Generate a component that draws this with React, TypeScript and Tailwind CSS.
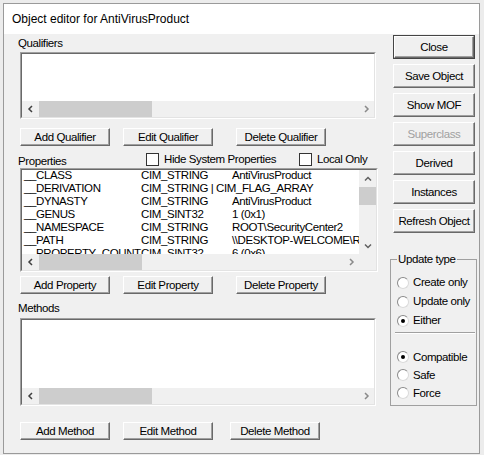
import type { ReactNode } from "react";

const font = "font-['Liberation_Sans',Arial,sans-serif]";

function Chev({ d, c = "#606060" }: { d: "l" | "r" | "u" | "d"; c?: string }) {
  const p = { l: "M5 1L2 4l3 3", r: "M3 1l3 3-3 3", u: "M1 5.5l3-3 3 3", d: "M1 2.5l3 3 3-3" }[d];
  return (
    <svg width="8" height="8" viewBox="0 0 8 8">
      <path d={p} stroke={c} strokeWidth="1.5" fill="none" />
    </svg>
  );
}

function HScroll({ thumb }: { thumb: string }) {
  return (
    <div className="flex h-[16px] shrink-0 bg-[#f0f0f0]">
      <div className="flex w-[17px] items-center justify-center"><Chev d="l" c="#404040" /></div>
      <div className="flex-1"><div className={`h-full bg-[#cdcdcd] ${thumb}`} /></div>
      <div className="flex w-[17px] items-center justify-center"><Chev d="r" c="#8a8a8a" /></div>
    </div>
  );
}

function Frame({ className, children }: { className: string; children: ReactNode }) {
  return (
    <div className={`border border-t-[#a0a0a0] border-l-[#a0a0a0] border-r-white border-b-white ${className}`}>
      <div className="flex h-full flex-col overflow-hidden border border-t-[#696969] border-l-[#696969] border-r-[#e3e3e3] border-b-[#e3e3e3] bg-white">
        {children}
      </div>
    </div>
  );
}

function Btn({ children, className = "", off }: { children: ReactNode; className?: string; off?: boolean }) {
  return (
    <div
      className={`flex items-center justify-center whitespace-nowrap border border-t-white border-l-white border-r-[#696969] border-b-[#696969] bg-[#f0f0f0] shadow-[inset_-1px_-1px_0_#a0a0a0] ${off ? "text-[#a0a0a0]" : "text-black"} ${className}`}
    >
      {children}
    </div>
  );
}

function Check() {
  return <span className="block h-[13px] w-[13px] shrink-0 border border-[#333333] bg-white" />;
}

function Radio({ on, label, h }: { on?: boolean; label: string; h: string }) {
  return (
    <div className={`flex items-center pl-[6px] ${h}`}>
      <span className="flex h-[12px] w-[12px] items-center justify-center rounded-full border border-t-[#8a8a8a] border-l-[#8a8a8a] border-r-[#dadada] border-b-[#dadada] bg-white">
        {on && <span className="h-[4px] w-[4px] rounded-full bg-black" />}
      </span>
      <span className="ml-[4px]">{label}</span>
    </div>
  );
}

const props: [string, string, string][] = [
  ["__CLASS", "CIM_STRING", "AntiVirusProduct"],
  ["__DERIVATION", "CIM_STRING | CIM_FLAG_ARRAY", ""],
  ["__DYNASTY", "CIM_STRING", "AntiVirusProduct"],
  ["__GENUS", "CIM_SINT32", "1 (0x1)"],
  ["__NAMESPACE", "CIM_STRING", "ROOT\\SecurityCenter2"],
  ["__PATH", "CIM_STRING", "\\\\DESKTOP-WELCOME\\ROOT\\SecurityCenter2:AntiVirusProduct"],
  ["__PROPERTY_COUNT", "CIM_SINT32", "6 (0x6)"],
];

export default function App() {
  return (
    <div className={`h-[455px] w-[484px] overflow-hidden bg-[#ececec] pl-[3px] pt-[3px] text-black ${font}`}>
      <div className="flex h-[451px] w-[477px] flex-col border border-[#9a9a9a] bg-[#f0f0f0]">
        <div className="flex h-[30px] shrink-0 items-center bg-white pl-[8px] text-[12px]">
          Object editor for AntiVirusProduct
        </div>
        <div className="flex flex-1 text-[11.5px] leading-[13px] tracking-[-0.4px]">
          <div className="flex w-[386px] flex-col">
            <div className="ml-[14px] mt-[3px] h-[13px]">Qualifiers</div>
            <Frame className="ml-[16px] mt-[2px] h-[67px] w-[356px]">
              <div className="flex-1" />
              <HScroll thumb="w-[113px]" />
            </Frame>
            <div className="ml-[16px] mt-[9px] flex h-[18px]">
              <Btn className="w-[90px]">Add Qualifier</Btn>
              <Btn className="ml-[13px] w-[90px]">Edit Qualifier</Btn>
              <Btn className="ml-[23px] w-[90px]">Delete Qualifier</Btn>
            </div>
            <div className="mt-[5px] flex h-[16px] items-center">
              <span className="ml-[14px] w-[128px] pt-[4px]">Properties</span>
              <div className="flex w-[153px] items-center">
                <Check />
                <span className="ml-[5px]">Hide System Properties</span>
              </div>
              <div className="flex items-center">
                <Check />
                <span className="ml-[5px]">Local Only</span>
              </div>
            </div>
            <Frame className="ml-[16px] mt-[1px] h-[104px] w-[358px]">
              <div className="flex flex-1 overflow-hidden">
                <div className="flex-1 overflow-hidden pl-[2px]">
                  <div className="-mt-[1px]">
                    {props.map(([n, t, v]) => (
                      <div key={n} className="grid h-[13px] grid-cols-[117px_91px_1fr] whitespace-nowrap">
                        <span>{n}</span>
                        <span>{t}</span>
                        <span>{v}</span>
                      </div>
                    ))}
                  </div>
                </div>
                <div className="flex w-[17px] flex-col bg-[#f0f0f0]">
                  <div className="flex h-[17px] items-center justify-center"><Chev d="u" /></div>
                  <div className="h-[18px] bg-[#cdcdcd]" />
                  <div className="flex-1" />
                  <div className="flex h-[17px] items-center justify-center"><Chev d="d" /></div>
                </div>
              </div>
              <div className="flex">
                <div className="flex-1"><HScroll thumb="w-[103px]" /></div>
                <div className="w-[17px] bg-[#f0f0f0]" />
              </div>
            </Frame>
            <div className="ml-[16px] mt-[4px] flex h-[18px]">
              <Btn className="w-[90px]">Add Property</Btn>
              <Btn className="ml-[13px] w-[90px]">Edit Property</Btn>
              <Btn className="ml-[23px] w-[90px]">Delete Property</Btn>
            </div>
            <div className="ml-[14px] mt-[8px] h-[13px]">Methods</div>
            <Frame className="ml-[16px] mt-[3px] h-[88px] w-[356px]">
              <div className="flex-1" />
              <HScroll thumb="w-[113px]" />
            </Frame>
            <div className="ml-[16px] mt-[16px] flex h-[18px]">
              <Btn className="w-[90px]">Add Method</Btn>
              <Btn className="ml-[13px] w-[90px]">Edit Method</Btn>
              <Btn className="ml-[17px] w-[90px]">Delete Method</Btn>
            </div>
          </div>

          <div className="flex w-[87px] flex-col">
            <div className="ml-[3px] mt-[1px] w-[82px] border border-[#454545]">
              <Btn className="h-[22px] w-full">Close</Btn>
            </div>
            <Btn className="ml-[3px] mt-[5px] h-[24px] w-[82px]">Save Object</Btn>
            <Btn className="ml-[3px] mt-[5px] h-[24px] w-[82px]">Show MOF</Btn>
            <Btn className="ml-[3px] mt-[5px] h-[24px] w-[82px]" off>Superclass</Btn>
            <Btn className="ml-[3px] mt-[5px] h-[24px] w-[82px]">Derived</Btn>
            <Btn className="ml-[3px] mt-[5px] h-[24px] w-[82px]">Instances</Btn>
            <Btn className="ml-[3px] mt-[5px] h-[24px] w-[82px]">Refresh Object</Btn>
            <fieldset className="mt-[20px] h-[153px] w-[87px] border border-[#a0a0a0]">
              <legend className="ml-[6px] px-[1px] leading-[13px]">Update type</legend>
              <div className="flex flex-col pt-[7px]">
                <Radio h="h-[19px]" label="Create only" />
                <Radio h="h-[19px]" label="Update only" />
                <Radio h="h-[19px]" label="Either" on />
                <div className="ml-[4px] mr-[1px] mt-[2px] h-[2px] border-t border-b border-[#a0a0a0] border-b-white" />
                <div className="mt-[14px]" />
                <Radio h="h-[18px]" label="Compatible" on />
                <Radio h="h-[18px]" label="Safe" />
                <Radio h="h-[18px]" label="Force" />
              </div>
            </fieldset>
          </div>
        </div>
      </div>
    </div>
  );
}
